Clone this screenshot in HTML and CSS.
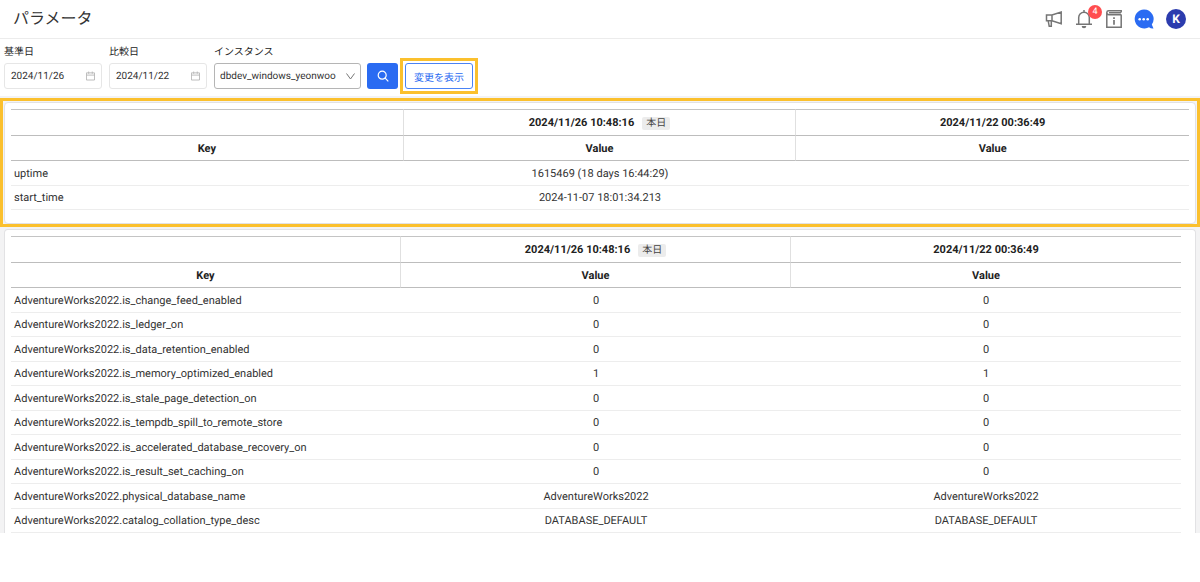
FILE: index.html
```html
<!DOCTYPE html>
<html lang="ja">
<head>
<meta charset="utf-8">
<title>パラメータ</title>
<link rel="stylesheet" href="styles.css">
</head>
<body>
<header class="topbar">
  <h1 class="title">パラメータ</h1>
  <nav class="actions">
    <button class="icon-btn" aria-label="Announcements">
      <svg width="18" height="18" viewBox="0 0 18 18" fill="none" stroke="#757575" stroke-width="1.5"><path d="M1.500 5H7L16.200 2V13.800L7 10.800H1.500ZM7 5V10.800M3.200 10.800 4.200 16.300H6.300V10.800"/></svg>
    </button>
    <button class="icon-btn" aria-label="Notifications">
      <svg width="20" height="20" viewBox="0 0 20 20" fill="none" stroke="#757575" stroke-width="1.500"><path d="M2 15.200H18M4.700 15V8.500A5.300 5.300 0 0 1 15.300 8.500V15M10 3V1"/><path d="M7.700 17H12.300A2.300 2.300 0 0 1 7.700 17Z" fill="#757575" stroke="none"/></svg>
      <span class="badge">4</span>
    </button>
    <button class="icon-btn" aria-label="Information">
      <svg width="18" height="20" viewBox="0 0 18 20" fill="none" stroke="#757575" stroke-width="1.500"><path d="M16.200 5.500V18.200H1.800V3.500A1.800 1.800 0 0 1 3.600 1.800H16.200V3.500M1.800 3.500Q1.800 5.700 4 5.700H16.200M4 3.700H16"/><path d="M9 8.200V10M9 11V15.700" stroke-width="1.700"/></svg>
    </button>
    <button class="icon-btn" aria-label="Chat">
      <svg width="20" height="20" viewBox="0 0 20 20"><path d="M10 .5A9.500 9.500 0 1 0 15 18.200Q17 19.700 19.500 19.400L17.800 15.500A9.500 9.500 0 0 0 10 .5Z" fill="#2a6bf2"/><g fill="#fff"><circle cx="5.700" cy="10.300" r="1.300"/><circle cx="9.700" cy="10.300" r="1.300"/><circle cx="13.700" cy="10.300" r="1.300"/></g></svg>
    </button>
    <button class="avatar" aria-label="Account">K</button>
  </nav>
</header>

<form class="filters">
  <div class="field">
    <label for="base">基準日</label>
    <div class="control date">
      <input id="base" type="text" value="2024/11/26">
      <svg width="10" height="10" viewBox="0 0 10 10" fill="none" stroke="#b5b5b5"><path d="M.5 1.500H9.500V9.500H.5ZM.5 4H9.500M3 0V2.500M7 0V2.500"/></svg>
    </div>
  </div>
  <div class="field">
    <label for="compare">比較日</label>
    <div class="control date">
      <input id="compare" type="text" value="2024/11/22">
      <svg width="10" height="10" viewBox="0 0 10 10" fill="none" stroke="#b5b5b5"><path d="M.5 1.500H9.500V9.500H.5ZM.5 4H9.500M3 0V2.500M7 0V2.500"/></svg>
    </div>
  </div>
  <div class="field">
    <label for="instance">インスタンス</label>
    <div class="control instance">
      <select id="instance"><option>dbdev_windows_yeonwoo</option></select>
      <svg class="chevron" width="9" height="7" viewBox="0 0 9 7" fill="none" stroke="#777"><path d="M.5 .5 4.500 6 8.500 .5"/></svg>
    </div>
  </div>
  <div class="buttons">
    <button class="search" type="button" aria-label="検索">
      <svg width="12" height="12" viewBox="0 0 12 12" fill="none" stroke="#fff" stroke-width="1.200"><circle cx="5.200" cy="5.200" r="4"/><path d="M8.200 8.200 11.300 11.300"/></svg>
    </button>
    <div class="marked"><button class="changes" type="button">変更を表示</button></div>
  </div>
</form>

<main class="content">
  <section class="highlight">
    <div class="card">
      <table>
        <thead>
          <tr><th></th><th>2024/11/26 10:48:16<span class="today">本日</span></th><th>2024/11/22 00:36:49</th></tr>
          <tr><th>Key</th><th>Value</th><th>Value</th></tr>
        </thead>
        <tbody>
          <tr><td>uptime</td><td>1615469 (18 days 16:44:29)</td><td></td></tr>
          <tr><td>start_time</td><td>2024-11-07 18:01:34.213</td><td></td></tr>
        </tbody>
      </table>
    </div>
  </section>
  <section class="card card-list">
    <table>
      <thead>
        <tr><th></th><th>2024/11/26 10:48:16<span class="today">本日</span></th><th>2024/11/22 00:36:49</th></tr>
        <tr><th>Key</th><th>Value</th><th>Value</th></tr>
      </thead>
      <tbody>
        <tr><td>AdventureWorks2022.is_change_feed_enabled</td><td>0</td><td>0</td></tr>
        <tr><td>AdventureWorks2022.is_ledger_on</td><td>0</td><td>0</td></tr>
        <tr><td>AdventureWorks2022.is_data_retention_enabled</td><td>0</td><td>0</td></tr>
        <tr><td>AdventureWorks2022.is_memory_optimized_enabled</td><td>1</td><td>1</td></tr>
        <tr><td>AdventureWorks2022.is_stale_page_detection_on</td><td>0</td><td>0</td></tr>
        <tr><td>AdventureWorks2022.is_tempdb_spill_to_remote_store</td><td>0</td><td>0</td></tr>
        <tr><td>AdventureWorks2022.is_accelerated_database_recovery_on</td><td>0</td><td>0</td></tr>
        <tr><td>AdventureWorks2022.is_result_set_caching_on</td><td>0</td><td>0</td></tr>
        <tr><td>AdventureWorks2022.physical_database_name</td><td>AdventureWorks2022</td><td>AdventureWorks2022</td></tr>
        <tr><td>AdventureWorks2022.catalog_collation_type_desc</td><td>DATABASE_DEFAULT</td><td>DATABASE_DEFAULT</td></tr>
      </tbody>
    </table>
  </section>
</main>
</body>
</html>
```

FILE: styles.css
```css
* { box-sizing: border-box; }

body {
  margin: 0;
  background: #fff;
  color: #333;
  font-family: Roboto, "Noto Sans CJK JP", sans-serif;
  font-size: 11px;
  text-rendering: geometricPrecision;
}

button, input, select { font: inherit; color: inherit; text-rendering: inherit; }
button { padding: 0; border: 0; background: none; cursor: pointer; }
svg { display: block; }

.topbar {
  display: flex;
  align-items: center;
  justify-content: space-between;
  height: 39px;
  padding: 0 14px 0 13px;
  border-bottom: 1px solid #ececec;
}

.title { margin: 0; font-size: 16px; font-weight: 400; line-height: 24px; }

.actions { display: flex; align-items: center; gap: 10px; }
.icon-btn { position: relative; display: flex; align-items: center; justify-content: center; width: 20px; height: 20px; }
.badge {
  position: absolute;
  top: -4px;
  right: -8px;
  width: 14px;
  height: 14px;
  border-radius: 7px;
  background: #ff4d4f;
  color: #fff;
  font-size: 9px;
  line-height: 14px;
  text-align: center;
}
.avatar {
  width: 20px;
  height: 20px;
  margin-left: 2px;
  border-radius: 10px;
  background: #2c3cae;
  color: #fff;
  font-size: 12px;
  font-weight: 700;
  line-height: 20px;
}

.filters { display: flex; align-items: flex-end; gap: 7px; padding: 7px 4px; }
.field { display: flex; flex-direction: column; gap: 3px; }
.field label { font-size: 10px; line-height: 14px; color: #222; }
.control { display: flex; align-items: center; height: 26px; border: 1px solid #e6e6e6; border-radius: 3px; }
.control input, .control select { width: 100%; min-width: 0; padding: 0; border: 0; outline: 0; background: none; }
.date { width: 98px; padding: 0 6px; font-size: 10px; }
.instance { position: relative; width: 147px; border-color: #b5b5b5; }
.instance select { height: 24px; padding: 0 16px 0 5px; appearance: none; font-size: 10px; }
.chevron { position: absolute; right: 5px; top: 9px; pointer-events: none; }
.buttons { display: flex; gap: 2px; margin: -5px 0 -5px -1px; align-items: center; }
.search {
  display: flex;
  align-items: center;
  justify-content: center;
  width: 31px;
  height: 26px;
  border-radius: 3px;
  background: #2a6bf2;
}
.marked { padding: 2px; border: 3px solid #fbc02d; }
.changes {
  display: block;
  height: 26px;
  padding: 0 8px;
  border: 1px solid #4a83f5;
  border-radius: 3px;
  color: #2a6bf2;
  font-size: 10px;
}

.content { padding-top: 2px; background: #f3f3f4; }
.highlight { padding: 1px 1px 0; border: 3px solid #fbc02d; }
.card { border: 1px solid #e2e2e4; border-radius: 4px; padding: 6px 6px 13px; background: #fff; }
.card-list { margin: 2px 4px 0; padding: 6px 14px 0 6px; border-bottom: 0; border-radius: 4px 4px 0 0; }

table { width: 100%; table-layout: fixed; border-collapse: separate; border-spacing: 0; }
th { height: 25px; padding: 1px 0 0; border-bottom: 1px solid #bdbdbd; color: #222; font-weight: 700; line-height: 14px; }
th:not(:last-child) { border-right: 1px solid #e0e0e0; }
thead tr:first-child th { height: 27px; border-top: 1px solid #c4c4c4; }
td { height: 25px; padding: 1px 3px 0; border-bottom: 1px solid #ededed; line-height: 14px; text-align: center; }
tbody tr:nth-child(even) td { height: 24px; }
td:first-child { text-align: left; }

.today {
  display: inline-block;
  margin-left: 8px;
  padding: 0 4px;
  border-radius: 2px;
  background: #ececec;
  color: #444;
  font-size: 10px;
  font-weight: 400;
  line-height: 13px;
}
```
